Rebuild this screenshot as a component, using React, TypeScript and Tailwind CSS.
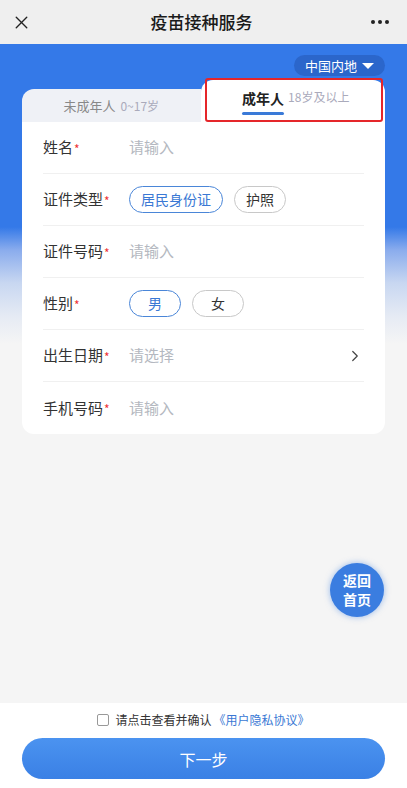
import React from "react";
import { X, ChevronRight } from "lucide-react";

const rows = [
  { label: "姓名", type: "input", placeholder: "请输入" },
  { label: "证件类型", type: "chips", options: ["居民身份证", "护照"] },
  { label: "证件号码", type: "input", placeholder: "请输入" },
  { label: "性别", type: "chips", options: ["男", "女"] },
  { label: "出生日期", type: "select", placeholder: "请选择" },
  { label: "手机号码", type: "input", placeholder: "请输入" },
];

function Row({ row, last }: { row: (typeof rows)[number]; last: boolean }) {
  return (
    <div
      className={`flex h-[52px] items-center ${
        last ? "" : "border-b border-[#f0f0f0]"
      }`}
    >
      <div className="flex w-[86px] shrink-0 items-center text-[15px] text-[#333]">
        {row.label}
        <span className="ml-[1px] mt-[2px] text-[12px] leading-none text-[#e33]">*</span>
      </div>
      {row.type === "chips" ? (
        <div className="flex gap-[11px]">
          {row.options!.map((o, i) => (
            <span
              key={o}
              className={`flex h-[27px] min-w-[52px] items-center justify-center rounded-full border px-[11px] text-[14px] ${
                i === 0
                  ? "border-[#4a86d8] text-[#3a78d4]"
                  : "border-[#c8c8c8] text-[#333]"
              }`}
            >
              {o}
            </span>
          ))}
        </div>
      ) : (
        <div className="flex flex-1 items-center justify-between">
          <span className="text-[15px] text-[#b4b8c0]">{row.placeholder}</span>
          {row.type === "select" && (
            <ChevronRight size={18} strokeWidth={1.6} className="text-[#444]" />
          )}
        </div>
      )}
    </div>
  );
}

export default function App() {
  return (
    <div
      className="flex h-[788px] w-[407px] flex-col overflow-hidden bg-[#f5f5f5]"
      style={{ fontFamily: '"Noto Sans CJK SC", "Noto Sans", sans-serif' }}
    >
      {/* top nav */}
      <div className="flex h-[44px] shrink-0 items-center justify-between bg-[#efefef] px-[11px]">
        <X size={21} strokeWidth={1.6} className="text-[#222]" />
        <div className="text-[17px] font-medium text-[#1a1a1a]">疫苗接种服务</div>
        <div className="flex gap-[3px] pr-[7px]">
          <span className="h-[4px] w-[4px] rounded-full bg-[#222]" />
          <span className="h-[4px] w-[4px] rounded-full bg-[#222]" />
          <span className="h-[4px] w-[4px] rounded-full bg-[#222]" />
        </div>
      </div>

      {/* main */}
      <div className="relative flex-1 bg-[linear-gradient(180deg,#3479e8_0px,#3479e8_183px,#8aaced_206px,#c8d7f1_239px,#e6ebf4_273px,#f5f5f5_300px)] px-[22px]">
        <div className="flex justify-end pt-[11px]">
          <div className="flex h-[21px] items-center gap-[5px] rounded-full bg-[#2b66cb] px-[11px] text-[13px] text-white">
            中国内地
            <span className="h-0 w-0 border-x-[6px] border-t-[6px] border-x-transparent border-t-white" />
          </div>
        </div>

        {/* card */}
        <div className="relative mt-[4px]">
          <div className="flex h-[42px] items-end">
            <div className="flex h-[33px] flex-1 items-center justify-center gap-[5px] rounded-tl-[12px] bg-[#eff1f6]">
              <span className="text-[13px] text-[#888]">未成年人</span>
              <span className="text-[12px] text-[#aab]">0~17岁</span>
            </div>
            <div className="flex h-[42px] flex-1 items-center justify-center gap-[4px] rounded-t-[12px] bg-white pb-[8px] pl-[6px]">
              <div className="relative">
                <span className="text-[14px] font-bold text-[#222]">成年人</span>
                <span className="absolute bottom-[-6px] left-0 h-[3px] w-full rounded-full bg-[#3a7ad8]" />
              </div>
              <span className="text-[12px] text-[#aab]">18岁及以上</span>
            </div>
          </div>
          <div className="rounded-b-[12px] bg-white px-[21px]">
            {rows.map((r, i) => (
              <Row key={r.label} row={r} last={i === rows.length - 1} />
            ))}
          </div>
          {/* annotation box */}
          <div className="absolute right-[2px] top-[-2px] h-[44px] w-[178px] rounded-[3px] border-2 border-[#e5262a]" />
        </div>

        {/* float button */}
        <div className="absolute right-[23px] top-[519px] flex h-[54px] w-[54px] flex-col items-center justify-center rounded-full bg-[#3a7de0] text-[14px] font-bold leading-[19px] text-white shadow-[0_0_6px_rgba(58,125,224,0.5)]">
          <span>返回</span>
          <span>首页</span>
        </div>
      </div>

      {/* bottom */}
      <div className="flex h-[85px] shrink-0 flex-col items-center bg-white px-[22px] pt-[8px] shadow-[0_-8px_12px_rgba(0,0,0,0.04)]">
        <div className="flex items-center gap-[6px] text-[12px]">
          <span className="h-[12px] w-[12px] rounded-[2px] border border-[#999]" />
          <span className="text-[#333]">请点击查看并确认</span>
          <span className="-ml-[4px] text-[#3a78d4]">《用户隐私协议》</span>
        </div>
        <button className="mt-[9px] flex h-[41px] w-full items-center justify-center rounded-full bg-[linear-gradient(180deg,#4b93f0,#3a80e5)] text-[16px] text-white">
          下一步
        </button>
      </div>
    </div>
  );
}
